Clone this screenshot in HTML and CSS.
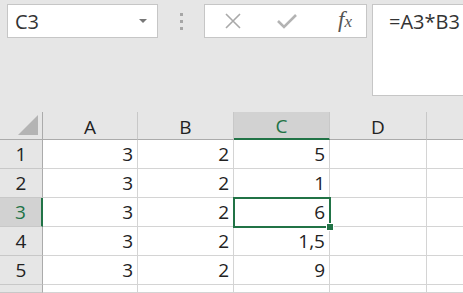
FILE: index.html
```html
<!DOCTYPE html>
<html lang="pt-br">
<head>
  <meta charset="UTF-8">
  <title>Planilha</title>
  <link rel="stylesheet" href="styles.css">
</head>
<body>
<div class="toolbar">
    <div class="namebox">
        <span>C3</span>
        <span class="arrow"></span>
    </div>
    <div class="grip">
        <i></i><i></i><i></i>
    </div>
    <div class="buttons">
        <svg class="btn" width="18" height="18" viewBox="0 0 18 18">
            <path d="M2 2 L16 16 M16 2 L2 16" stroke="#a9a9a9" stroke-width="1.6" fill="none"/>
        </svg>
        <svg class="btn" width="22" height="18" viewBox="0 0 22 18">
            <path d="M2 9 L8 15 L20 3" stroke="#b3b3b3" stroke-width="2.6" fill="none"/>
        </svg>
        <span class="fx">f<small>x</small></span>
    </div>
    <div class="formula">=A3*B3</div>
</div>

<div class="sheet">
    <div class="grid">
        <div class="corner"><span class="tri"></span></div>
        <div class="colhead">A</div>
        <div class="colhead">B</div>
        <div class="colhead active">C</div>
        <div class="colhead">D</div>
        <div class="colhead last"></div>

        <div class="rowhead">1</div>
        <div class="cell">3</div><div class="cell">2</div><div class="cell">5</div><div class="cell"></div><div class="cell last"></div>
        <div class="rowhead">2</div>
        <div class="cell">3</div><div class="cell">2</div><div class="cell">1</div><div class="cell"></div><div class="cell last"></div>
        <div class="rowhead active">3</div>
        <div class="cell">3</div><div class="cell">2</div><div class="cell">6</div><div class="cell"></div><div class="cell last"></div>
        <div class="rowhead">4</div>
        <div class="cell">3</div><div class="cell">2</div><div class="cell">1,5</div><div class="cell"></div><div class="cell last"></div>
        <div class="rowhead">5</div>
        <div class="cell">3</div><div class="cell">2</div><div class="cell">9</div><div class="cell"></div><div class="cell last"></div>
        <div class="rowhead"></div>
        <div class="cell"></div><div class="cell"></div><div class="cell"></div><div class="cell"></div><div class="cell last"></div>
    </div>
    <div class="selection"><span class="handle"></span></div>
</div>
</body>
</html>
```

FILE: styles.css
```css
body {
    margin: 0;
    background-color: #e6e6e6;
    font-family: "Open Sans", "Liberation Sans", sans-serif;
    color: #222;
    width: 463px;
    height: 293px;
    overflow: hidden;
}
.toolbar {
    display: flex;
    align-items: flex-start;
    padding: 4px 0 0 7px;
    height: 108px;
    box-sizing: border-box;
}
.namebox {
    width: 151px;
    height: 34px;
    box-sizing: border-box;
    background: #fff;
    border: 1px solid #c6c6c6;
    display: flex;
    align-items: center;
    justify-content: space-between;
    padding: 0 10px 0 7px;
    font-size: 20px;
    color: #333;
}
.arrow {
    width: 0;
    height: 0;
    border-left: 4px solid transparent;
    border-right: 4px solid transparent;
    border-top: 4px solid #777;
}
.grip {
    width: 46px;
    height: 34px;
    display: flex;
    flex-direction: column;
    align-items: center;
    justify-content: center;
    gap: 4px;
}
.grip i {
    width: 3px;
    height: 3px;
    background: #a6a6a6;
}
.buttons {
    width: 163px;
    height: 34px;
    box-sizing: border-box;
    background: #fff;
    border: 1px solid #c6c6c6;
    display: flex;
    align-items: center;
    padding-left: 19px;
    gap: 34px;
}
.fx {
    font-family: "Liberation Serif", serif;
    font-style: italic;
    font-size: 23px;
    color: #555;
    margin-left: 6px;
    margin-top: -3px;
}
.fx small {
    font-size: 17px;
}
.formula {
    margin-left: 5px;
    flex: 1;
    height: 92px;
    box-sizing: border-box;
    background: #fff;
    border: 1px solid #c6c6c6;
    border-right: none;
    padding: 3px 0 0 16px;
    font-size: 20px;
    color: #333;
}
.sheet {
    position: relative;
    background: #fff;
    margin-top: 4px;
}
.grid {
    display: grid;
    grid-template-columns: 43px 95px 96px 96px 97px 1fr;
    grid-template-rows: 28px repeat(5, 29px) 8px;
    font-size: 19px;
}
.corner {
    background: #e6e6e6;
    border-right: 1px solid #ababab;
    border-bottom: 1px solid #ababab;
    position: relative;
}
.tri {
    position: absolute;
    right: 4px;
    bottom: 4px;
    width: 0;
    height: 0;
    border-left: 20px solid transparent;
    border-bottom: 20px solid #b4b4b4;
}
.colhead {
    background: #e6e6e6;
    border-right: 1px solid #c8c8c8;
    border-bottom: 1px solid #ababab;
    display: flex;
    align-items: center;
    justify-content: center;
    padding-top: 2px;
}
.colhead.active {
    background: #d2d2d2;
    color: #217346;
    border-bottom: 2px solid #217346;
}
.rowhead {
    background: #e6e6e6;
    border-right: 1px solid #ababab;
    border-bottom: 1px solid #c8c8c8;
    display: flex;
    align-items: center;
    justify-content: center;
}
.rowhead.active {
    background: #d2d2d2;
    color: #217346;
    border-right: 2px solid #217346;
}
.cell {
    border-right: 1px solid #d4d4d4;
    border-bottom: 1px solid #d4d4d4;
    display: flex;
    align-items: center;
    justify-content: flex-end;
    padding-right: 4px;
}
.last, .colhead.last {
    border-right: none;
}
.selection {
    position: absolute;
    left: 233px;
    top: 85px;
    width: 98px;
    height: 31px;
    box-sizing: border-box;
    border: 2px solid #217346;
}
.handle {
    position: absolute;
    right: -5px;
    bottom: -5px;
    width: 6px;
    height: 6px;
    background: #217346;
    border: 1px solid #fff;
}
```
